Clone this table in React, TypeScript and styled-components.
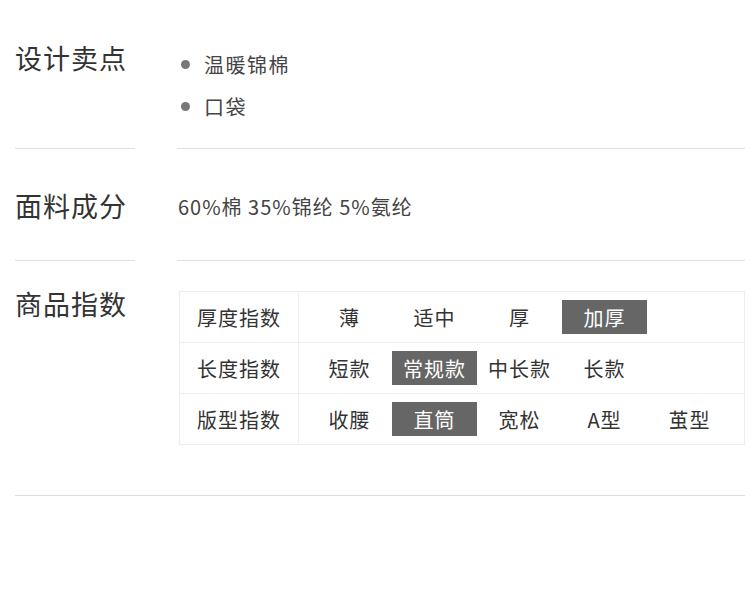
import styled, { createGlobalStyle } from "styled-components";

const GlobalStyle = createGlobalStyle`
  html, body {
    margin: 0;
    padding: 0;
    background: #fff;
  }
  body {
    font-family: "Noto Sans CJK SC", "Noto Sans", sans-serif;
    color: #333;
  }
`;

const Page = styled.div`
  width: 755px;
  box-sizing: border-box;
  padding: 0 10px 0 15px;
`;

const Section = styled.div<{ $top: number; $bottom: number }>`
  display: flex;
  align-items: flex-start;
  gap: 42px;
  padding-top: ${(p) => p.$top}px;
  padding-bottom: ${(p) => p.$bottom}px;
`;

const Label = styled.div<{ $offset: number }>`
  flex: 0 0 120px;
  margin-top: ${(p) => p.$offset}px;
  font-size: 27px;
  line-height: 30px;
  letter-spacing: 1px;
  color: #333;
  white-space: nowrap;
`;

const Content = styled.div<{ $offset?: number }>`
  flex: 1;
  min-width: 0;
  margin-top: ${(p) => p.$offset ?? 0}px;
`;

const BulletList = styled.ul`
  list-style: none;
  margin: 0;
  padding: 0;
`;

const Bullet = styled.li`
  display: flex;
  align-items: center;
  height: 42px;
  font-size: 20px;
  letter-spacing: 1.5px;
  color: #444;

  &::before {
    content: "";
    width: 9px;
    height: 9px;
    border-radius: 50%;
    background: #777;
    margin: 0 14px 0 4px;
  }
`;

const PlainText = styled.div`
  font-size: 20px;
  line-height: 42px;
  letter-spacing: 1px;
  color: #444;
  padding-left: 1px;
`;

const DividerRow = styled.div`
  display: flex;
  gap: 42px;
`;

const Line = styled.div<{ $narrow?: boolean }>`
  height: 1px;
  background: #ddd;
  flex: ${(p) => (p.$narrow ? "0 0 120px" : "1")};
`;

const Table = styled.div`
  margin-left: 2px;
  border: 1px solid #eee;
`;

const Row = styled.div`
  display: flex;
  height: 50px;

  & + & {
    border-top: 1px solid #eee;
  }
`;

const HeadCell = styled.div`
  flex: 0 0 118px;
  display: flex;
  align-items: center;
  justify-content: center;
  border-right: 1px solid #eee;
  font-size: 20px;
  letter-spacing: 1px;
  color: #333;
`;

const Options = styled.div`
  display: flex;
  align-items: center;
  padding-left: 8px;
`;

const Option = styled.div<{ $active?: boolean }>`
  width: 85px;
  height: 34px;
  display: flex;
  align-items: center;
  justify-content: center;
  font-size: 20px;
  letter-spacing: 1px;
  background: ${(p) => (p.$active ? "#666" : "transparent")};
  color: ${(p) => (p.$active ? "#fff" : "#333")};
`;

const indexRows = [
  { name: "厚度指数", options: ["薄", "适中", "厚", "加厚"], active: 3 },
  { name: "长度指数", options: ["短款", "常规款", "中长款", "长款"], active: 1 },
  { name: "版型指数", options: ["收腰", "直筒", "宽松", "A型", "茧型"], active: 1 },
];

export default function App() {
  return (
    <>
      <GlobalStyle />
      <Page>
        <Section $top={43} $bottom={21}>
          <Label $offset={0}>设计卖点</Label>
          <Content>
            <BulletList>
              <Bullet>温暖锦棉</Bullet>
              <Bullet>口袋</Bullet>
            </BulletList>
          </Content>
        </Section>
        <DividerRow>
          <Line $narrow />
          <Line />
        </DividerRow>

        <Section $top={37} $bottom={32}>
          <Label $offset={5}>面料成分</Label>
          <Content>
            <PlainText>60%棉 35%锦纶 5%氨纶</PlainText>
          </Content>
        </Section>
        <DividerRow>
          <Line $narrow />
          <Line />
        </DividerRow>

        <Section $top={28} $bottom={50}>
          <Label $offset={0}>商品指数</Label>
          <Content $offset={2}>
            <Table>
              {indexRows.map((row) => (
                <Row key={row.name}>
                  <HeadCell>{row.name}</HeadCell>
                  <Options>
                    {row.options.map((opt, i) => (
                      <Option key={opt} $active={i === row.active}>
                        {opt}
                      </Option>
                    ))}
                  </Options>
                </Row>
              ))}
            </Table>
          </Content>
        </Section>
        <DividerRow>
          <Line />
        </DividerRow>
      </Page>
    </>
  );
}
